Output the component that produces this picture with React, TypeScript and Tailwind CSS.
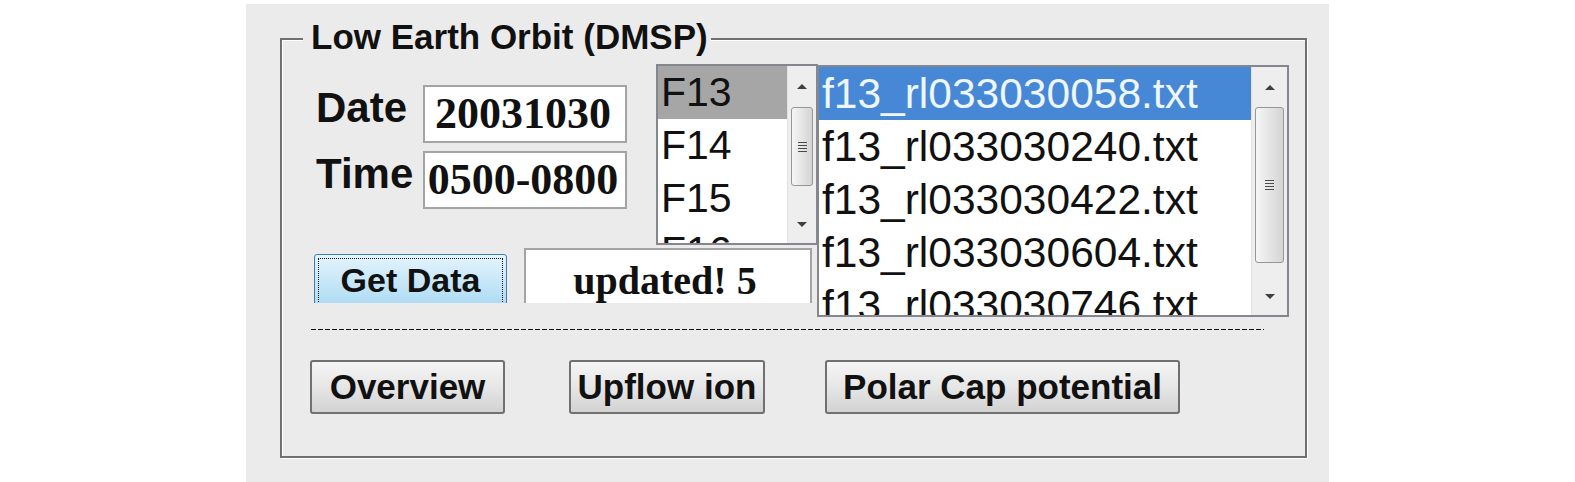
import type { ReactNode } from "react";

// ── Data ──────────────────────────────────────────────────────────────────────

const satellites = ["F13", "F14", "F15", "F16"];

const files = [
  "f13_rl033030058.txt",
  "f13_rl033030240.txt",
  "f13_rl033030422.txt",
  "f13_rl033030604.txt",
  "f13_rl033030746.txt",
];

const SANS = "font-['Liberation_Sans',Arial,sans-serif]";
const SERIF = "font-['Liberation_Serif','Times_New_Roman',serif]";

// ── Small pieces ──────────────────────────────────────────────────────────────

function Arrow({ down = false }: { down?: boolean }) {
  return (
    <svg width="10" height="5" viewBox="0 0 10 5" className="block">
      {down ? (
        <path d="M0 0 H10 L5 5 Z" fill="#3f3f3f" />
      ) : (
        <path d="M0 5 H10 L5 0 Z" fill="#3f3f3f" />
      )}
    </svg>
  );
}

function Grip() {
  return (
    <div className="flex flex-col gap-[2px]">
      <div className="h-px w-[9px] bg-[#4a4a4a]" />
      <div className="h-px w-[9px] bg-[#4a4a4a]" />
      <div className="h-px w-[9px] bg-[#4a4a4a]" />
      <div className="h-px w-[9px] bg-[#4a4a4a]" />
    </div>
  );
}

// Vertical Win7-style scrollbar
function ScrollBar({
  width,
  upHeight,
  thumbHeight,
  downHeight,
}: {
  width: string;
  upHeight: string;
  thumbHeight: string;
  downHeight: string;
}) {
  return (
    <div
      className={`flex h-full flex-col border-l border-[#e2e2e2] bg-[#eeeeee] ${width}`}
    >
      <div className={`flex items-center justify-center ${upHeight}`}>
        <Arrow />
      </div>
      <div
        className={`mx-[3px] flex items-center justify-center rounded-[3px] border border-[#979797] bg-linear-to-r from-[#f6f6f6] to-[#d4d4d4] ${thumbHeight}`}
      >
        <Grip />
      </div>
      <div className="flex-1" />
      <div className={`flex items-center justify-center ${downHeight}`}>
        <Arrow down />
      </div>
    </div>
  );
}

function GroupBox({ title, children }: { title: string; children: ReactNode }) {
  return (
    <div className="relative h-[420px] w-[1027px] border-2 border-[#707074] shadow-[1px_1px_0_#ffffff,inset_1px_1px_0_#ffffff]">
      <div
        className={`absolute left-[21px] top-[-23px] bg-[#ebebeb] pl-[8px] pr-[3px] text-[35px] font-bold leading-[40px] text-[#111] ${SANS}`}
      >
        {title}
      </div>
      {children}
    </div>
  );
}

function Field({ label, value }: { label: string; value: string }) {
  return (
    <div className="flex items-start">
      <div
        className={`w-[107px] text-[42px] font-bold leading-[46px] text-[#111] ${SANS}`}
      >
        {label}
      </div>
      <div
        className={`h-[58px] w-[204px] border-2 border-[#a4a4a4] bg-white pr-[4px] text-center text-[44px] font-bold leading-[54px] text-[#111] ${SERIF}`}
      >
        {value}
      </div>
    </div>
  );
}

function PushButton({ label, width }: { label: string; width: string }) {
  return (
    <button
      type="button"
      className={`h-[54px] rounded-[3px] border-2 border-[#707070] bg-linear-to-b from-[#f5f5f5] via-[#e6e6e6] to-[#d2d2d2] text-[35px] font-bold leading-[48px] text-[#111] ${SANS} ${width}`}
    >
      {label}
    </button>
  );
}

// ── Component ─────────────────────────────────────────────────────────────────

export default function App() {
  return (
    <div className="h-[482px] w-[1575px] overflow-hidden bg-white pl-[246px] pt-[4px]">
      <div className="h-[478px] w-[1083px] bg-[#ebebeb] pl-[34px] pt-[34px]">
        <GroupBox title="Low Earth Orbit (DMSP)">
          {/* Top area: date/time, satellite list, file list */}
          <div className="flex items-start pt-[24px]">
            <div className="w-[536px]">
              <div className="flex items-start">
                <div className="flex w-[374px] flex-col gap-[8px] pl-[34px] pt-[21px]">
                  <Field label="Date" value="20031030" />
                  <Field label="Time" value="0500-0800" />
                </div>

                {/* Satellite list */}
                <div className="flex h-[181px] w-[162px] overflow-hidden border-2 border-[#84888e] bg-white">
                  <div className="flex-1 overflow-hidden">
                    {satellites.map((s, i) => (
                      <div
                        key={s}
                        className={`h-[53px] pl-[3px] text-[41px] leading-[53px] text-[#111] ${SANS} ${
                          i === 0 ? "bg-[#a6a6a6]" : ""
                        }`}
                      >
                        {s}
                      </div>
                    ))}
                  </div>
                  <ScrollBar
                    width="w-[29px]"
                    upHeight="h-[41px]"
                    thumbHeight="h-[79px]"
                    downHeight="h-[38px]"
                  />
                </div>
              </div>

              {/* Get Data row, clipped at the bottom */}
              <div className="flex h-[58px] items-start overflow-hidden">
                <button
                  type="button"
                  className={`ml-[32px] mt-[9px] h-[58px] w-[193px] rounded-[3px] border border-[#3c7fb1] bg-linear-to-b from-[#e4f4fd] via-[#c6e6f7] to-[#a6d8f3] p-[3px] text-[34px] font-bold text-[#111] ${SANS}`}
                >
                  <div className="h-full w-full border border-dotted border-[#111] leading-[42px]">
                    Get Data
                  </div>
                </button>
                <div
                  className={`ml-[17px] mt-[3px] h-[62px] w-[288px] border-2 border-[#a4a4a4] bg-white pr-[6px] text-center text-[40px] font-bold leading-[61px] text-[#111] ${SERIF}`}
                >
                  updated! 5
                </div>
              </div>
            </div>

            {/* File list */}
            <div className="-ml-px mt-px flex h-[252px] w-[472px] overflow-hidden border-2 border-[#84888e] bg-white">
              <div className="flex-1 overflow-hidden">
                {files.map((f, i) => (
                  <div
                    key={f}
                    className={`h-[53px] whitespace-nowrap pl-[3px] text-[42.5px] leading-[53px] ${SANS} ${
                      i === 0 ? "bg-[#4688d6] text-[#eef6ff]" : "text-[#111]"
                    }`}
                  >
                    {f}
                  </div>
                ))}
              </div>
              <ScrollBar
                width="w-[36px]"
                upHeight="h-[40px]"
                thumbHeight="h-[156px]"
                downHeight="h-[38px]"
              />
            </div>
          </div>

          {/* Separator */}
          <div className="ml-[29px] mt-[12px] h-px w-[953px] bg-[repeating-linear-gradient(90deg,#111111_0_5px,transparent_5px_7px)]" />

          {/* Analysis buttons */}
          <div className="ml-[28px] mt-[30px] flex gap-[64px]">
            <PushButton label="Overview" width="w-[195px]" />
            <div className="flex gap-[60px]">
              <PushButton label="Upflow ion" width="w-[196px]" />
              <PushButton label="Polar Cap potential" width="w-[355px]" />
            </div>
          </div>
        </GroupBox>
      </div>
    </div>
  );
}
